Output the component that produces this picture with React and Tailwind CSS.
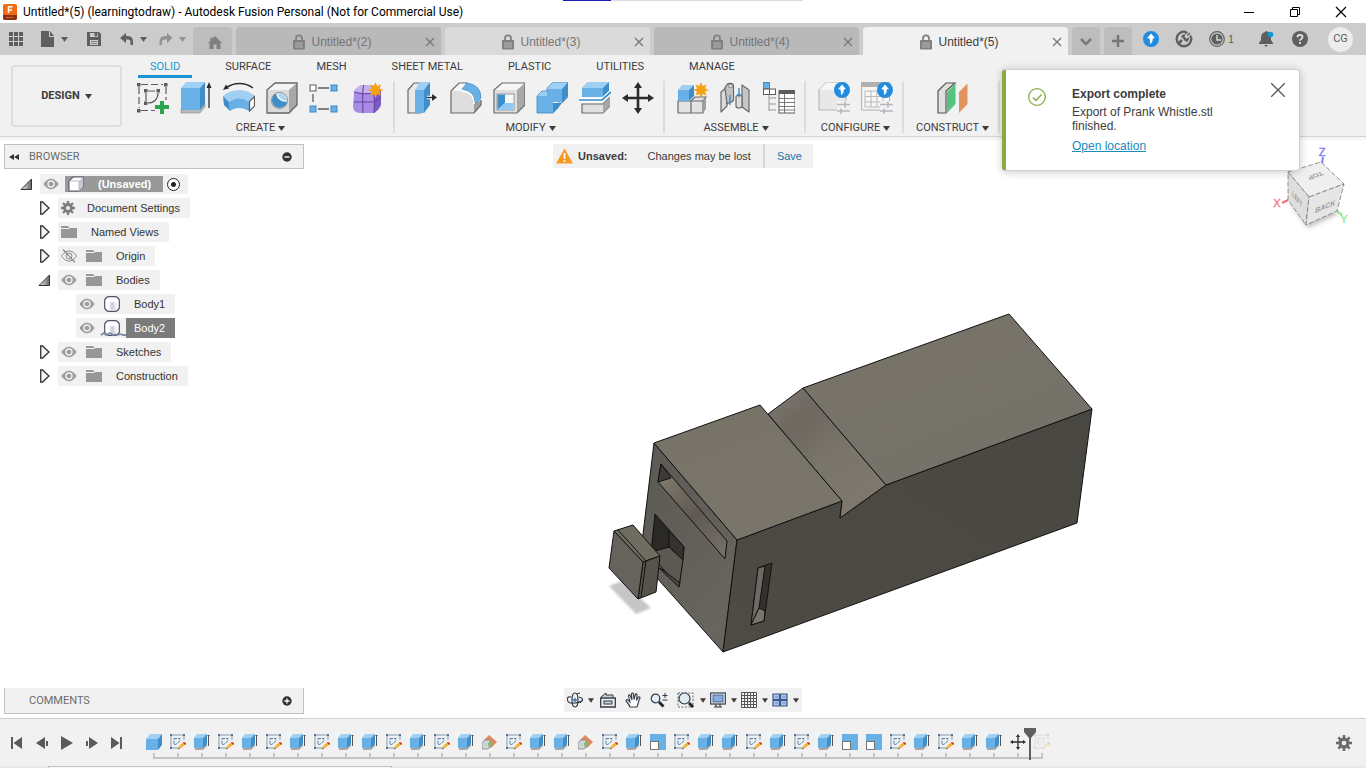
import React from "react";

const B1 = "#68b0e5";
const B2 = "#9fd0f4";
const B3 = "#3f8dc9";
const G = "#5c5c5c";

function Caret({ className = "" }) {
  return (
    <svg className={"shrink-0 " + className} width="7" height="5" viewBox="0 0 7 5" aria-hidden="true">
      <path d="M0 0H7L3.5 5Z" fill="currentColor" />
    </svg>
  );
}

function Svg({ s = 32, box, children, className = "" }) {
  return (
    <svg className={"block shrink-0 " + className} width={s} height={s} viewBox={box || `0 0 ${s} ${s}`} fill="none" aria-hidden="true">
      {children}
    </svg>
  );
}

/* ---------- shared glyph parts ---------- */

const STAR = "M0-8L1.6-3.9L5.6-5.6L3.9-1.6L8 0L3.9 1.6L5.6 5.6L1.6 3.9L0 8L-1.6 3.9L-5.6 5.6L-3.9 1.6L-8 0L-3.9-1.6L-5.6-5.6L-1.6-3.9Z";

function MovePath({ color = "#2b2b2b" }) {
  return <path d="M16 0L20 6H17.3V14.7H26V12L32 16L26 20V17.3H17.3V26H20L16 32L12 26H14.7V17.3H6V20L0 16L6 12V14.7H14.7V6H12Z" fill={color} />;
}

function UpBadge({ x, y, r = 8 }) {
  return (
    <g transform={`translate(${x} ${y})`}>
      <circle r={r} fill="#1f8ce0" />
      <path d="M0-5.5L4-.8H1.8C1.8 2 1.4 3.8-1 5C-.9 3-1.2 1-1.6-.8H-4Z" fill="#fff" />
    </g>
  );
}

function Sliders() {
  return (
    <g stroke="#b4b8bd" strokeWidth="1.6">
      <rect x="19" y="19" width="13" height="13" fill="#f1f1f1" stroke="none" />
      <path d="M19 22.5H32M27 19.5V25.5M19 29H32M23 26.5V32" />
    </g>
  );
}

/* ---------- ribbon icons ---------- */

const icons = {
  sketch: (
    <Svg>
      <path d="M4 2.5H26M2 5V26M29 5V18M4 28.5H18" stroke={G} strokeWidth="1.2" strokeDasharray="7 3" />
      <path d="M11 9H18M9 11V19M21 11C21 17 17 21 11 21" stroke={G} strokeWidth="1.2" />
      <g fill={G}>
        <rect x="0" y="1" width="3.5" height="3.5" /><rect x="27" y="1" width="3.5" height="3.5" /><rect x="0" y="27" width="3.5" height="3.5" />
        <rect x="7" y="7" width="3.5" height="3.5" /><rect x="19.500" y="7" width="3.500" height="3.500" /><rect x="7" y="19.500" width="3.500" height="3.500" />
      </g>
      <path d="M23 19H27V23H32V27H27V32H23V27H18V23H23Z" fill="#2da44e" />
    </Svg>
  ),
  extrude: (
    <Svg>
      <path d="M1 27V31H20L25 25V21Z" fill="#b8b8b8" stroke="#8c8c8c" strokeWidth=".6" />
      <path d="M1 6H20V28H1Z" fill={B1} /><path d="M1 6L6 0H25L20 6Z" fill={B2} /><path d="M20 6L25 0V22L20 28Z" fill={B3} />
      <path d="M29 3V26" stroke="#2b2b2b" strokeWidth="1.3" /><path d="M26.500 6L29 0L31.500 6Z" fill="#2b2b2b" />
    </Svg>
  ),
  revolve: (
    <Svg>
      <path d="M3 6C11 0 22 0 30 6" stroke="#2b2b2b" strokeWidth="1.3" /><path d="M0 8L3 2.500L6 6.500Z" fill="#2b2b2b" />
      <path d="M0 14C9 6 23 6 32 14L26 20C19 15 13 15 6 20Z" fill={B2} />
      <path d="M6 20C13 15 19 15 26 20V29C19 25 13 25 7 29Z" fill={B1} /><path d="M0 14L6 20L7 29L1 23Z" fill={B3} />
      <path d="M26.500 19.500L31.500 14.500V24L26.500 29Z" fill="#fff" stroke={G} strokeWidth="1.200" />
    </Svg>
  ),
  hole: (
    <Svg>
      <path d="M1 8L9 1H31V23L23 31H1Z" fill="#dadada" /><path d="M1 8L9 1H31L23 8Z" fill="#f4f4f4" /><path d="M23 8L31 1V23L23 31Z" fill="#a8a8a8" />
      <path d="M1 8L9 1H31V23L23 31H1Z" stroke="#666" strokeWidth="1.300" />
      <circle cx="13.500" cy="18.500" r="8" fill="#f3f3f3" stroke="#888" /><path d="M10 11.500C11 17 15 20 21 20A7.600 7.600 0 1 1 10 11.500Z" fill="#3f8dc9" />
      <path d="M12 12C13 16 17 19 21 19C19 12 15 11 12 12Z" fill="#a9d5f6" />
    </Svg>
  ),
  pattern: (
    <Svg>
      <path d="M9 6H20M4 12V20M9 27H20" stroke={G} strokeWidth="1.300" />
      <rect x="1" y="3" width="6" height="6" fill="#fff" stroke={G} /><rect x="22" y="3" width="6" height="6" fill={B1} stroke={B3} />
      <rect x="1" y="24" width="6" height="6" fill={B1} stroke={B3} /><rect x="22" y="24" width="6" height="6" fill={B1} stroke={B3} />
    </Svg>
  ),
  form: (
    <Svg>
      <path d="M2 11Q2 7 9 3H20Q29 3 29 10V22Q29 26 22 31H8Q1 31 1 24Z" fill="#a98be3" />
      <path d="M2 10Q4 5 10 3H20Q27 3 29 8Q27 10 22 11H8Q4 11 2 10Z" fill="#c6b2ef" /><path d="M22 11L29 8V22Q28 27 22 31Q23 20 22 11Z" fill="#7d5bc4" />
      <path d="M2 20H22L29 15M12 3Q10 7 11 31M2 10Q12 13 22 11Q23 20 22 31" stroke="#6545ab" strokeWidth="1.100" />
      <path d={STAR} transform="translate(23.500 8)" fill="#f5a114" />
    </Svg>
  ),
  pushpull: (
    <Svg>
      <path d="M1 8L7 1H13V31H1Z" fill="#e9e9e9" stroke="#6a6a6a" strokeWidth="1.200" />
      <path d="M8 8H17V31H8Z" fill={B1} /><path d="M8 8L13 0H23L17 8Z" fill={B2} /><path d="M17 8L23 0V23L17 31Z" fill={B3} />
      <path d="M20 15.500H27" stroke="#fff" strokeWidth="3.500" /><path d="M20 15.500H27" stroke="#2b2b2b" strokeWidth="1.400" /><path d="M25 12L30 15.500L25 19Z" fill="#2b2b2b" />
    </Svg>
  ),
  fillet: (
    <Svg>
      <path d="M1 9L9 1H18Q31 4 31 17V23L24 31H1Z" fill="#dedede" /><path d="M1 9L9 1H17L13 9Z" fill="#f6f6f6" /><path d="M24 31V22L31 18V23Z" fill="#9e9e9e" />
      <path d="M1 9L9 1H18M31 18V23L24 31H1V9" stroke="#6a6a6a" strokeWidth="1.200" />
      <path d="M12 7L17 1Q31 3 31 16L25 22Q25 9 12 7Z" fill={B1} stroke={B3} strokeWidth=".700" /><path d="M12 9Q24 10 24 22" stroke="#fff" strokeWidth="1.500" />
    </Svg>
  ),
  shell: (
    <Svg>
      <path d="M1 8L9 1H32V23L24 31H1Z" fill="#dedede" /><path d="M1 8L9 1H32L24 8Z" fill="#f6f6f6" /><path d="M24 8L32 1V23L24 31Z" fill="#a8a8a8" />
      <path d="M1 8L9 1H32V23L24 31H1Z" stroke="#6a6a6a" strokeWidth="1.200" />
      <rect x="4" y="12" width="17" height="16" fill="#f9f9f9" stroke="#999" /><path d="M4.500 12.500L12 12.500V21L4.500 28Z" fill={B3} /><path d="M4.500 28L12 21H20.500V28Z" fill="#8fcaf5" />
    </Svg>
  ),
  combine: (
    <Svg>
      <path d="M1 14H11V7H26V20H17V31H1Z" fill={B1} /><path d="M1 14L6 9H11V7L17 0H32L26 7H11V14Z" fill={B2} />
      <path d="M26 7L32 0V14L26 21ZM17 21H26L22 26V26L17 31Z" fill={B3} /><path d="M1 14L6 9H11V6L17 0H32V15L26 21H22V26L17 31H1Z" stroke={B3} strokeWidth=".800" />
    </Svg>
  ),
  split: (
    <Svg>
      <path d="M3 6L9 0H30L24 6V15H3Z" fill={B1} /><path d="M3 6L9 0H30L24 6Z" fill={B2} /><path d="M24 6L30 0V9L24 15Z" fill={B3} />
      <path d="M0 18H23L32 10" stroke="#fff" strokeWidth="4" /><path d="M0 18H23L32 10" stroke="#338cc8" strokeWidth="1.700" />
      <path d="M3 22H24L30 16V25L24 31H3Z" fill="#e0e0e0" stroke="#6a6a6a" strokeWidth="1.200" /><path d="M24 22L30 16V25L24 31Z" fill="#a8a8a8" />
    </Svg>
  ),
  move: <Svg><MovePath /></Svg>,
  component: (
    <Svg>
      <path d="M1 19H14V31H1ZM14 19L18 15H29L26 19V31H14Z" fill="#e3e3e3" stroke="#6a6a6a" strokeWidth="1.200" /><path d="M26 19L29 15V27L26 31Z" fill="#a0a0a0" /><path d="M14 19H26" stroke="#6a6a6a" />
      <path d="M1 8H12V19H1Z" fill={B1} /><path d="M1 8L5 3H17L12 8Z" fill={B2} /><path d="M12 8L17 3V14L12 19Z" fill={B3} />
      <path d={STAR} transform="translate(24 8)" fill="#f5a114" />
    </Svg>
  ),
  joint: (
    <Svg>
      <path d="M1 10L7 5V24L1 30Z" fill="#dadada" stroke="#6a6a6a" strokeWidth="1.200" strokeLinejoin="round" />
      <path d="M5 6Q7 1 10 1.500Q13.500 1 13.500 4V18Q13 20 10 20L7 22Z" fill="#c2c2c2" stroke="#6a6a6a" strokeWidth="1.200" />
      <ellipse cx="10.500" cy="4" rx="2.400" ry="1.500" fill="#eee" stroke="#6a6a6a" strokeWidth=".8" />
      <path d="M22 3L29 8V30L22 25Z" fill="#c6c6c6" stroke="#6a6a6a" strokeWidth="1.200" strokeLinejoin="round" />
      <path d="M16 15Q16 13 19 13T22 15V24Q22 26 19 26T16 24Z" fill="#dedede" stroke="#6a6a6a" strokeWidth="1.200" />
      <path d="M10 13V23M19 6V14M17.500 12L19 14.500L20.500 12" stroke={B3} strokeWidth="1.400" />
    </Svg>
  ),
  bom: (
    <Svg>
      <rect x=".500" y=".500" width="6" height="6" fill={B1} stroke={B3} /><rect x="0.500" y="7" width="6" height="5.500" fill="#fff" stroke={G} /><rect x="6.500" y="7" width="6" height="5.500" fill="#fff" stroke={G} />
      <path d="M6 13V29M6 16H13M6 22H13M6 28H13" stroke="#999" />
      <rect x="16" y="9" width="16" height="22" fill="#fff" stroke={G} /><rect x="16" y="8" width="16" height="4" fill={G} /><path d="M16 16.500H32M16 20.500H32M16 24.500H32M16 28H32M21.500 12V31" stroke={G} strokeWidth=".800" />
    </Svg>
  ),
  configure: (
    <Svg>
      <path d="M1 8L8 1H28V24L24 28H1Z" fill="#e8e8e8" stroke="#b8b8b8" strokeWidth="1.200" /><path d="M1 8L8 1H28L23 8Z" fill="#f6f6f6" /><Sliders /><UpBadge x={24} y={8} />
    </Svg>
  ),
  configTable: (
    <Svg>
      <rect x=".600" y="1" width="28" height="27" fill="#f6f6f6" stroke="#b0b0b0" /><rect x="0" y="0" width="29" height="5" fill="#b0b0b0" />
      <path d="M4 9H24M4 14.500H24M4 20H24M4 25H24M4 9V25M10 9V25M16 9V25M22 9V25" stroke="#b8b8b8" /><Sliders /><UpBadge x={24} y={8} />
    </Svg>
  ),
  plane: (
    <Svg>
      <path d="M1 9L9 1H18L9 9V31H1Z" fill="#e0e0e0" stroke="#555" strokeWidth="1.200" /><path d="M10 10L18.500 1.500V22L10 31Z" fill="#55c47e" /><path d="M22 10L30.500 1.500V22L22 31Z" fill="#e3935d" />
    </Svg>
  ),
};

const groups = [
  { label: "CREATE", items: ["sketch", "extrude", "revolve", "hole", "pattern", "form"] },
  { label: "MODIFY", items: ["pushpull", "fillet", "shell", "combine", "split", "move"] },
  { label: "ASSEMBLE", items: ["component", "joint", "bom"] },
  { label: "CONFIGURE", items: ["configure", "configTable"] },
  { label: "CONSTRUCT", items: ["plane"] },
];

/* ---------- title bar ---------- */

function TitleBar() {
  return (
    <header className="relative flex h-[23px] items-center bg-white pl-[3px] pr-[19px] text-black">
      <div className="absolute left-[563px] top-0 flex h-px w-60" aria-hidden="true">
        <span className="w-12 bg-[#1a1ab8]" />
        <span className="flex-1 bg-[#dcdcdc]" />
      </div>
      <Svg s={14} box="0 0 14 16" className="h-4">
        <rect width="14" height="16" rx="2" fill="#f26a16" />
        <path d="M0 11H14V14Q14 16 12 16H2Q0 16 0 14Z" fill="#8c2f0b" />
        <path d="M5.500 9V2.800H9.500M5.500 6H9" stroke="#fff" strokeWidth="1.500" />
        <path d="M3.500 13.500H10.500" stroke="#d98a5e" strokeWidth="1.200" strokeDasharray="2 .8" />
      </Svg>
      <h1 className="ml-[6px] flex-1 whitespace-nowrap font-['Roboto',sans-serif] text-[12px]">
        Untitled*(5) (learningtodraw) - Autodesk Fusion Personal (Not for Commercial Use)
      </h1>
      <div className="flex items-center gap-[34px]">
        <button aria-label="Minimize"><Svg s={12}><path d="M1 6.500H11" stroke="#000" /></Svg></button>
        <button aria-label="Restore"><Svg s={12}><path d="M1.500 3.500H8.500V10.500H1.500ZM3.500 3.500V1.500H10.500V8.500H8.500" stroke="#000" /></Svg></button>
        <button aria-label="Close window"><Svg s={12}><path d="M1 1L11 11M11 1L1 11" stroke="#000" strokeWidth="1.200" /></Svg></button>
      </div>
    </header>
  );
}

/* ---------- document tab bar ---------- */

function Lock() {
  return (
    <Svg s={14} box="0 0 14 16" className="h-4">
      <path d="M4 8V4.500A3 3.200 0 0 1 10 4.500V8" stroke="#808080" strokeWidth="1.800" />
      <rect x="1" y="6" width="12" height="9.500" rx="1" fill="#808080" />
      <path d="M3 9H11M3 11H11M3 13H11" stroke="#c4c4c4" strokeWidth=".800" />
    </Svg>
  );
}

const tabs = [
  { name: "Untitled*(2)", cls: "bg-[#b9b9b9] text-[#757575]" },
  { name: "Untitled*(3)", cls: "bg-[#dadada] text-[#757575]" },
  { name: "Untitled*(4)", cls: "bg-[#b9b9b9] text-[#757575]" },
  { name: "Untitled*(5)", cls: "bg-[#f1f1f1] text-[#3c3c3c]" },
];

function TabBar() {
  return (
    <div className="flex h-8 items-end bg-[#cccccc] text-[#5f5f5f]">
      <div className="flex h-8 w-[193px] shrink-0 items-center pl-[9px]">
        <button aria-label="Data panel">
          <Svg s={14}><path d="M0 0H4V4H0ZM5 0H9V4H5ZM10 0H14V4H10ZM0 5H4V9H0ZM5 5H9V9H5ZM10 5H14V9H10ZM0 10H4V14H0ZM5 10H9V14H5ZM10 10H14V14H10Z" fill="#5f5f5f" /></Svg>
        </button>
        <button aria-label="File" className="ml-[18px] flex items-center gap-[6px]">
          <Svg s={14} box="0 0 14 16" className="h-4"><path d="M0 0H8V6H13V16H0ZM9 0L13 5H9Z" fill="#5f5f5f" /></Svg>
          <Caret />
        </button>
        <button aria-label="Save file" className="ml-[19px]">
          <Svg s={14}><path d="M0 0H12L14 2V14H0ZM3 1V5H11V1ZM3 8V13H11V8Z" fill="#5f5f5f" fillRule="evenodd" /><path d="M8 1H10V4H8ZM4 9.500H10M4 11.500H10" fill="#5f5f5f" stroke="#5f5f5f" strokeWidth=".700" /></Svg>
        </button>
        <button aria-label="Undo" className="ml-[19px] flex items-center gap-[6px]">
          <Svg s={14}><path d="M0 6L6 1V4H8Q13 4 13 10V13H10.500V10Q10.500 7.500 8 7.500H6V11Z" fill="#5f5f5f" /></Svg>
          <Caret />
        </button>
        <button aria-label="Redo" className="ml-[12px] flex items-center gap-[6px] text-[#929292]">
          <Svg s={14}><path d="M13.500 6L8 1V4H6Q.500 4 .500 10V13H3V10Q3 7.500 6 7.500H8V11Z" fill="#929292" /></Svg>
          <Caret />
        </button>
      </div>
      <nav className="flex min-w-0 flex-1 gap-1" aria-label="Documents">
        <button aria-label="Home" className="flex h-7 w-[39px] shrink-0 items-center justify-center rounded-t bg-[#bdbdbd]">
          <Svg s={14} className="mt-1 ml-1"><path d="M7 0L14 7H12.500V13H8.500V8.500H5.500V13H1.500V7H0L2.500 4.500V1.500H4.500V2.500Z" fill="#808080" /></Svg>
        </button>
        {tabs.map((t) => (
          <div key={t.name} className={"flex h-7 w-[205px] min-w-0 items-center rounded-t pr-[3px] pt-[2px] " + t.cls}>
            <button className="ml-[6px] flex flex-1 items-center justify-center gap-[5px] font-['Liberation_Sans',sans-serif] text-[12px]">
              <Lock />{t.name}
            </button>
            <button aria-label={"Close " + t.name} className="flex w-4 justify-center">
              <Svg s={10}><path d="M1 1L9 9M9 1L1 9" stroke="#777" strokeWidth="1.300" /></Svg>
            </button>
          </div>
        ))}
        <button aria-label="All tabs" className="flex h-7 w-7 shrink-0 items-center justify-center rounded-t bg-[#bdbdbd]">
          <Svg s={14}><path d="M2 5L7 10L12 5" stroke="#7a7a7a" strokeWidth="2.500" /></Svg>
        </button>
        <button aria-label="New tab" className="flex h-7 w-7 shrink-0 items-center justify-center rounded-t bg-[#bdbdbd]">
          <Svg s={14}><path d="M7 1V13M1 7H13" stroke="#757575" strokeWidth="2.500" /></Svg>
        </button>
      </nav>
      <div className="flex h-8 shrink-0 items-center pr-[13px]">
        <button aria-label="Updates"><Svg s={16}><UpBadge x={8} y={8} /></Svg></button>
        <button aria-label="Extensions" className="ml-4">
          <Svg s={18}>
            <path d="M11.500 2.100A7.300 7.300 0 1 0 16 7" stroke="#5f5f5f" strokeWidth="2.300" />
            <path d="M3.500 13.500L7 10" stroke="#5f5f5f" strokeWidth="2.500" />
            <path d="M6 6.500Q8 3.500 10.500 4.500L9.500 7L11.500 8.500L14 7.500Q14.500 10.500 11.500 12L9.500 10.500L8 8.500Z" fill="#5f5f5f" />
            <path d="M12.500 5.500L15 3M10.500 4L12.500 2M14.500 7.500L16.500 5.500" stroke="#5f5f5f" strokeWidth="1.500" />
          </Svg>
        </button>
        <button aria-label="Job status" className="ml-4 flex w-[25px] items-center justify-between font-['Liberation_Sans',sans-serif] text-[11px]">
          <Svg s={16}><circle cx="8" cy="8" r="7.300" stroke="#5f5f5f" strokeWidth="1.200" /><circle cx="8" cy="8" r="5.600" fill="#5f5f5f" /><path d="M8 4V9H12" stroke="#ddd" strokeWidth="1.400" /></Svg>1
        </button>
        <button aria-label="Notifications" className="ml-[25px]">
          <Svg s={16}><path d="M7 0Q12 1 12 7V9L14 12V13H0V12L2 9V7Q2 2 6 1ZM5 14H9L7 16Z" fill="#5f5f5f" /><circle cx="11.500" cy="3.500" r="2.800" fill="#0f97d6" /></Svg>
        </button>
        <button aria-label="Help" className="ml-[17px]">
          <Svg s={16}><circle cx="8" cy="8" r="8" fill="#5f5f5f" /><path d="M5.500 6.200Q5.500 3.800 8 3.800T10.500 6Q10.500 7.300 9.200 8Q8 8.700 8 9.800M8 11V13" stroke="#e4e4e4" strokeWidth="1.800" /></Svg>
        </button>
        <button aria-label="Account" className="ml-5 flex size-[25px] items-center justify-center rounded-full bg-[#ececec] pt-px font-['Roboto',sans-serif] text-[11px]">CG</button>
      </div>
    </div>
  );
}

/* ---------- ribbon ---------- */

const ribbonTabs = ["SOLID", "SURFACE", "MESH", "SHEET METAL", "PLASTIC", "UTILITIES", "MANAGE"];

function Ribbon() {
  return (
    <section className="flex border-b-[3px] border-[#f6f6f6] bg-[#f1f1f1] font-['Roboto',sans-serif] text-[11px] text-[#3c3c3c]">
      <div className="flex h-[82px] w-full border-b border-[#d4d4d4]">
        <button className="ml-[11px] mt-[10px] flex h-[62px] w-[111px] shrink-0 items-center justify-center gap-[5px] rounded border-2 border-[#dedede] font-bold">
          DESIGN <Caret />
        </button>
        <div className="ml-[3px] min-w-0">
          <nav className="ml-[13px] flex gap-[21px]" aria-label="Ribbon">
            {ribbonTabs.map((t, i) => (
              <button key={t} className={"h-[23px] whitespace-nowrap border-b-[3px] px-3 pt-[2px] leading-5 " + (i === 0 ? "border-[#1b95d2] text-[#1b95d2]" : "border-transparent")}>
                {t}
              </button>
            ))}
          </nav>
          <div className="mt-[3px] flex">
            {groups.map((g) => (
              <div key={g.label} className="flex h-[52px] flex-col items-center border-r-2 border-[#dcdcdc] pl-[12px] pr-[9px] pt-px">
                <div className="flex gap-[11px]">
                  {g.items.map((n) => (
                    <button key={n} aria-label={n}>{icons[n]}</button>
                  ))}
                </div>
                <button className="mt-[7px] flex items-center gap-[3px] leading-[14px]">{g.label}<Caret /></button>
              </div>
            ))}
          </div>
        </div>
      </div>
    </section>
  );
}

/* ---------- notification ---------- */

function Toast() {
  return (
    <aside role="status" className="absolute right-[66px] top-[69px] z-10 flex w-[298px] rounded border border-l-4 border-[#d0d0d0] border-l-[#86ac43] bg-white pb-[17px] pt-[17px] font-['Liberation_Sans',sans-serif] text-[12px] leading-[14px] text-[#3c3c3c] shadow-[0_1px_8px_rgba(0,0,0,0.22)]">
      <Svg s={18} className="ml-[22px] mt-px"><circle cx="9" cy="9" r="8.300" stroke="#86ac43" strokeWidth="1.300" /><path d="M5 9.500L8 12.500L13.500 6.500" stroke="#86ac43" strokeWidth="1.400" /></Svg>
      <div className="ml-[26px] flex-1">
        <h2 className="font-bold">Export complete</h2>
        <p className="mt-1 w-[150px]">Export of Prank Whistle.stl finished.</p>
        <a href="#location" className="mt-[6px] inline-block font-['Liberation_Sans',sans-serif] text-[#1b8bc0] underline">Open location</a>
      </div>
      <button aria-label="Dismiss" className="mr-[14px] -mt-1 self-start"><Svg s={14}><path d="M0 0L14 14M14 0L0 14" stroke="#555" strokeWidth="1.300" /></Svg></button>
    </aside>
  );
}

/* ---------- browser tree ---------- */

function Eye({ off }) {
  return (
    <Svg s={16}>
      <path d="M.3 8Q8-2.500 15.700 8Q8 18.500.3 8Z" fill={off ? "none" : "#9c9c9c"} stroke={off ? "#8a8a8a" : "none"} />
      <circle cx="8" cy="8" r="3" stroke={off ? "#8a8a8a" : "#f1f1f1"} strokeWidth={off ? 1 : 1.4} />
      {off && <path d="M2 1.500L14 14.500" stroke="#8a8a8a" strokeWidth="1.200" />}
    </Svg>
  );
}

function Arrow({ open }) {
  return open ? (
    <Svg s={12}>
      <defs><linearGradient id="tri"><stop offset="0" stopColor="#eee" /><stop offset="1" stopColor="#666" /></linearGradient></defs>
      <path d="M11.500 1V11.500H1Z" fill="url(#tri)" stroke="#333" />
    </Svg>
  ) : (
    <Svg s={12} box="0 0 12 14" className="h-[14px]"><path d="M2.700 1H4.500L11 7L4.500 13H2.700Z" fill="#f4f4f4" stroke="#333" strokeWidth="1.300" /></Svg>
  );
}

const Folder = () => <Svg s={16}><path d="M0 2H7L8 3V4H0ZM0 5H8L9 4H16V14H0Z" fill="#979797" /></Svg>;

function Gear({ s = 14, c = "#7d7d7d" }) {
  return (
    <Svg s={s} box="0 0 16 16">
      <path d="M8 0V16M0 8H16M2.300 2.300L13.700 13.700M13.700 2.300L2.300 13.700" stroke={c} strokeWidth="2.600" />
      <circle cx="8" cy="8" r="5.600" fill={c} /><circle cx="8" cy="8" r="2.300" fill="#f1f1f1" />
    </Svg>
  );
}

function Cylinder({ sel }) {
  return (
    <Svg s={16} className="overflow-visible">
      <defs><linearGradient id="cyl"><stop offset=".2" stopColor="#fff" /><stop offset=".5" stopColor="#c9ccd8" /><stop offset=".9" stopColor="#f2f3f6" /></linearGradient></defs>
      <path d="M.7 4Q2 .7 5 .7H11Q14 .7 15.300 4V12Q14 15.300 11 15.300H5Q2 15.300.7 12Z" fill="#fff" stroke="#4c5468" strokeWidth="1.200" />
      <path d="M3 6H13V13Q8 15 3 13Z" fill="url(#cyl)" />
      {sel && <path d="M-3 15L0 13L2 15L6 13L9 15L12 14M14 15L16 14L19 15L22 15" stroke="#7c8ca8" strokeWidth="1.800" />}
    </Svg>
  );
}

const tree = [
  { name: "Document Settings", icon: "gear" },
  { name: "Named Views", icon: "folder" },
  { name: "Origin", eye: "off" },
  { name: "Bodies", eye: "on", open: true },
  { name: "Body1", body: true, eye: "on" },
  { name: "Body2", body: true, eye: "on", sel: true },
  { name: "Sketches", eye: "on" },
  { name: "Construction", eye: "on" },
];

function TreeRow({ n }) {
  return (
    <li className={"flex h-5 items-center " + (n.body ? "pl-[76px]" : "pl-[38px]")}>
      {!n.body && <button aria-label={"Toggle " + n.name} className="mr-2 w-3"><Arrow open={n.open} /></button>}
      <div className={"flex h-5 items-center whitespace-nowrap bg-[#f1f1f1] " + (n.sel ? "" : "pr-[10px]")}>
        {n.eye && <button aria-label={"Visibility of " + n.name} className="ml-[3px] mr-[6px]"><Eye off={n.eye === "off"} /></button>}
        <span className={n.icon === "gear" ? "ml-[3px] mr-3" : n.sel ? "ml-[3px] mr-[6px]" : "ml-[3px] mr-[14px]"}>
          {n.icon === "gear" ? <Gear /> : n.body ? <Cylinder sel={n.sel} /> : <Folder />}
        </span>
        <span className={n.sel ? "flex h-5 items-center bg-[#7b7b7b] pl-2 pr-[10px] text-white" : ""}>{n.name}</span>
      </div>
    </li>
  );
}

function SidePanel() {
  return (
    <div className="relative flex w-[304px] flex-col pb-1 pl-1 pt-1">
      <div className="flex h-[25px] items-center border border-[#c0c0c0] bg-[#f1f1f1] pl-1 pr-[11px] font-['Roboto',sans-serif] text-[11px] text-[#6b6b6b]">
        <button aria-label="Collapse browser"><Svg s={10}><path d="M5 2V8L0 5ZM10 2V8L5 5Z" fill="#333" /></Svg></button>
        <h2 className="ml-[10px] flex-1 pt-px">BROWSER</h2>
        <button aria-label="Minimize browser"><Svg s={10}><circle cx="5" cy="5" r="4.700" fill="#333" /><path d="M2.500 5H7.500" stroke="#fff" strokeWidth="1.400" /></Svg></button>
      </div>
      <ul className="-ml-1 mt-[5px] flex flex-col gap-1 font-['Liberation_Sans',sans-serif] text-[11px] text-[#333]">
        <li className="flex h-5 items-center pl-[20px]">
          <button aria-label="Toggle document" className="mr-2 w-3"><Arrow open /></button>
          <div className="flex h-5 items-center bg-[#f1f1f1] pl-[3px] pr-2">
            <button aria-label="Visibility of document"><Eye /></button>
            <span className="ml-[6px] flex h-4 items-center gap-[14px] bg-[#999] pl-[3px] pr-[12px] font-bold text-white">
              <Svg s={16}><path d="M1 5L5 1H15V11L11 15H1Z" fill="#fff" stroke="#5a6072" strokeWidth="1.100" /><path d="M11 5L15 1V11L11 15Z" fill="#c5c9d2" /><path d="M1.500 5H11V15" stroke="#b9bdc8" /></Svg>
              (Unsaved)
            </span>
            <label className="ml-1 flex">
              <input type="radio" defaultChecked aria-label="Activate document" className="size-[13px] appearance-none rounded-full border border-[#222] bg-[radial-gradient(circle,#222_2px,#fff_3px)]" />
            </label>
          </div>
        </li>
        {tree.map((n) => <TreeRow key={n.name} n={n} />)}
      </ul>
      <div className="mt-auto flex h-[26px] items-center border border-t-0 border-[#c0c0c0] bg-[#f1f1f1] pl-6 pr-[11px] pt-px font-['Roboto',sans-serif] text-[11px] text-[#6b6b6b]">
        <h2 className="flex-1 pt-px">COMMENTS</h2>
        <button aria-label="Expand comments"><Svg s={10}><circle cx="5" cy="5" r="4.700" fill="#333" /><path d="M2.500 5H7.500M5 2.500V7.500" stroke="#fff" strokeWidth="1.300" /></Svg></button>
      </div>
    </div>
  );
}

/* ---------- model ---------- */

function Model() {
  return (
    <svg className="absolute inset-0 size-full" viewBox="0 140 1366 578" role="img" aria-label="Whistle body">
      <defs>
        <linearGradient id="front" x1="0" y1="0" x2=".6" y2="1"><stop offset="0" stopColor="#5b5953" /><stop offset="1" stopColor="#67655e" /></linearGradient>
        <linearGradient id="side" x1="0" y1="1" x2="1" y2="0"><stop offset="0" stopColor="#4e4b45" /><stop offset="1" stopColor="#494741" /></linearGradient>
        <linearGradient id="topL" x1="0" y1="0" x2=".5" y2="1"><stop offset="0" stopColor="#787367" /><stop offset="1" stopColor="#79756b" /></linearGradient>
        <linearGradient id="topR" x1="0" y1="0" x2=".7" y2="1"><stop offset="0" stopColor="#797468" /><stop offset="1" stopColor="#74716a" /></linearGradient>
        <linearGradient id="notch" gradientUnits="userSpaceOnUse" x1="778" y1="405" x2="862" y2="505"><stop offset="0" stopColor="#78736a" /><stop offset=".2" stopColor="#6d675f" /><stop offset=".55" stopColor="#79756b" /><stop offset="1" stopColor="#7e776d" /></linearGradient>
        <linearGradient id="slot" gradientUnits="userSpaceOnUse" x1="664" y1="480" x2="726" y2="550"><stop offset="0" stopColor="#7c766b" /><stop offset=".5" stopColor="#5f5952" /><stop offset="1" stopColor="#746e65" /></linearGradient>
        <filter id="soft"><feGaussianBlur stdDeviation="1" /></filter>
      </defs>
      <path d="M609 586L622 581L651 608L636 614Z" fill="#c6c6c6" filter="url(#soft)" />
      <g stroke="#111" strokeWidth="1" strokeLinejoin="round">
        <path d="M654 443L737 540L723 652L640 559Z" fill="url(#front)" />
        <path d="M737 540L842 501L840 518L886 485L1092 409L1077 523L723 652Z" fill="url(#side)" />
        <path d="M768 414L803 388L886 485L840 518L842 501Z" fill="url(#notch)" />
        <path d="M654 443L760 405L842 501L737 540Z" fill="url(#topL)" />
        <path d="M803 388L1009 314L1092 409L886 485Z" fill="url(#topR)" />
        <path d="M661 464L727 541L725 559L658 482Z" fill="url(#slot)" />
        <path d="M661 464L671 478L658 482Z" fill="#3e3c37" />
        <path d="M655 514L684 547L679 587L651 553Z" fill="#2a2926" />
        <path d="M669 530L684 547L683 560L669 547Z" fill="#35332f" />
        <path d="M655 551L669 547L683 560L679 587L657 562Z" fill="#5d5952" />
        <path d="M659 568L663 570L680 583L679 587Z" fill="#4c4943" />
        <path d="M758 568L772 563L764 621L751 625Z" fill="#33312d" />
        <path d="M758 568L765 566L759 608L751 625Z" fill="#6d6a64" />
        <path d="M759 608L765 611L764 621L751 625Z" fill="#79756d" />
        <path d="M614 531L633 525L660 556L643 562Z" fill="#716c62" />
        <path d="M643 562L660 556L656 592L638 599Z" fill="#55534c" />
        <path d="M614 531L643 562L638 599L609 568Z" fill="#65635c" />
        <path d="M618 530L646 561L641 598" fill="none" />
      </g>
    </svg>
  );
}

function ViewCube() {
  return (
    <svg className="absolute right-4 top-1 h-[90px] w-[80px]" viewBox="1270 144 80 90" role="img" aria-label="View cube">
      <defs><filter id="cubeShadow"><feGaussianBlur stdDeviation="2" /></filter></defs>
      <path d="M1290 203L1308 228L1338 214L1330 205Z" fill="#999" opacity=".6" filter="url(#cubeShadow)" />
      <path d="M1322 163L1323 157" stroke="#8080f0" strokeWidth="2" /><path d="M1288 200L1282 203" stroke="#f07070" strokeWidth="2" /><path d="M1337 211L1342 215" stroke="#80e880" strokeWidth="2" />
      <g stroke="#777" strokeWidth=".8" strokeDasharray="5 2">
        <path d="M1288 172L1321 162L1344 184L1309 197Z" fill="#efefef" /><path d="M1288 172L1309 197L1306 225L1288 200Z" fill="#dedede" /><path d="M1309 197L1344 184L1337 211L1306 225Z" fill="#e6e6e6" />
      </g>
      <g fontFamily="Liberation Sans, sans-serif" fontSize="8" fontWeight="bold" fill="#9a9a9a" textAnchor="middle">
        <text transform="matrix(-.9 .33 -.55 -.6 1314 174)">TOP</text>
        <text transform="matrix(.88 -.36 -.15 .95 1325 209)">BACK</text>
        <text transform="matrix(.5 .62 -.05 1 1297 202)">LEFT</text>
      </g>
      <g fontFamily="Liberation Sans, sans-serif" fontSize="11" textAnchor="middle" strokeWidth=".4">
        <text x="1322" y="156" fill="#7c7cf2" stroke="#7c7cf2">Z</text><text x="1277" y="207" fill="#f28080" stroke="#f28080">X</text><text x="1344" y="223" fill="#8ceb95" stroke="#8ceb95">Y</text>
      </g>
    </svg>
  );
}

/* ---------- view navigation ---------- */

const N = "#333c4a";
const nav = [
  ["Orbit", true, <Svg s={16} key="o"><path d="M8 1Q11 1 11 8T8 15T5 8T8 1Z" stroke={N} strokeWidth="1.200" /><path d="M12 5Q16 6 15.500 8T8 11T.5 8T4 5" stroke={N} strokeWidth="1.200" /><path d="M8 6V10M6 8H10" stroke="#3a72b0" strokeWidth="1.300" /><path d="M10 2L13 1M13 11L15 9" stroke={N} /></Svg>],
  ["Look at", false, <Svg s={16} key="l"><path d="M.7 6H15.300V15H.7Z" fill="#eee" stroke={N} strokeWidth="1.300" /><rect x="4" y="9" width="8" height="3" fill="#ccd" stroke={N} /><path d="M1 5L6 1V3H13V5" fill="#ccc" stroke={N} /></Svg>],
  ["Pan", false, <Svg s={16} key="p"><path d="M5 15Q4 12 1 9Q1 7 3 8L5 10L3.500 3.500Q4.500 2 5.500 4L7 8L6.500 1.500Q8 .5 8.500 2L9 7.500L10.500 2Q12 1.500 12 3L11.500 8.500L13.500 5Q15 4.500 15 6Q13.500 9 13 12L12 15Z" fill="#fff" stroke={N} strokeWidth="1.100" /></Svg>],
  ["Zoom", false, <Svg s={18} key="z" box="0 0 18 16"><circle cx="5.500" cy="6.500" r="4.300" fill="#e3eef6" stroke={N} strokeWidth="1.200" /><path d="M9 10L13.500 14.500" stroke="#222" strokeWidth="2.800" /><path d="M15 1V6M12.500 3.500H17.500M12.500 8H17.500" stroke={N} /></Svg>],
  ["Fit", true, <Svg s={18} key="f" box="0 0 18 16"><path d="M1 1H16V15H1Z" stroke="#666" strokeDasharray="2 1.500" /><circle cx="7.500" cy="6.500" r="5.500" fill="#dfeaf0" stroke={N} strokeWidth="1.200" /><path d="M12 11L16 15" stroke="#222" strokeWidth="3" /></Svg>],
  ["Display settings", true, <Svg s={16} key="d"><rect x=".700" y="1" width="14.600" height="11" fill="#fff" stroke={N} strokeWidth="1.200" /><rect x="3" y="3" width="10" height="7" fill="#87aee0" stroke="#46628c" /><path d="M6 12V15H10V12M4 15H12" stroke={N} strokeWidth="1.200" /></Svg>],
  ["Grid settings", true, <Svg s={16} key="g"><rect x=".500" y=".500" width="15" height="15" fill="#f3f3f3" /><path d="M.5.5H15.500V15.500H.5ZM3.500 0V16M6.500 0V16M9.500 0V16M12.500 0V16M0 3.500H16M0 6.500H16M0 9.500H16M0 12.500H16" stroke="#555" /></Svg>],
  ["Viewports", true, <Svg s={16} key="v"><path d="M1 2H7.500V7.500H1ZM8.500 2H15V7.500H8.500ZM1 8.500H7.500V14H1ZM8.500 8.500H15V14H8.500Z" fill="#a9c4ea" stroke="#3c5a8c" strokeWidth="1.200" /><path d="M3 5H6M10.500 5H13.500M3 11H6M10.500 11H13.500" stroke="#6489c0" /></Svg>],
];

function Canvas() {
  return (
    <main className="relative flex min-h-[578px] flex-1 bg-white">
      <Model />
      <ViewCube />
      <SidePanel />
      <div className="relative flex flex-1 flex-col items-center justify-between pb-[6px] pr-[304px] pt-1 font-['Liberation_Sans',sans-serif] text-[11px] text-[#3c3c3c]">
        <div className="flex h-6 items-center whitespace-nowrap bg-[#f1f1f1] pl-[3px]">
          <Svg s={17} box="0 0 17 16" className="h-4"><path d="M8.500.5L17 15.500H0Z" fill="#f59b23" /><path d="M8.500 5V11M8.500 12.300V14" stroke="#fff" strokeWidth="1.700" /></Svg>
          <strong className="ml-[5px]">Unsaved:</strong>
          <span className="ml-5">Changes may be lost</span>
          <button className="ml-3 h-6 border-l-2 border-[#d8d8d8] pl-3 pr-[11px] text-[#1672b0]">Save</button>
        </div>
        <div className="flex h-6 items-center bg-[#f1f1f1] px-[3px]" role="toolbar" aria-label="Navigation">
          {nav.map(([name, menu, icon], i) => (
            <button key={name} aria-label={name} className={"flex items-center gap-[5px] " + (i === 0 ? "" : i === 1 ? "ml-[6px]" : menu && i > 4 ? "ml-1" : "ml-[9px]")}>
              {icon}{menu && <Caret className="w-[6px]" />}
            </button>
          ))}
        </div>
      </div>
    </main>
  );
}

/* ---------- timeline ---------- */

const tl = {
  b: <Svg s={16} key="b"><path d="M0 5H12V16H0Z" fill={B1} /><path d="M0 5L4 0H16L12 5Z" fill={B2} /><path d="M12 5L16 0V11L12 16Z" fill={B3} /></Svg>,
  e: <Svg s={16} key="e"><path d="M1 13V16H9L13 12V9Z" fill="#aaa" /><path d="M0 4H9V14H0Z" fill={B1} /><path d="M0 4L3 0H13L9 4Z" fill={B2} /><path d="M9 4L13 0V10L9 14Z" fill={B3} /><path d="M14.500 1V12M13.500 1.500H15.500" stroke="#444" strokeWidth=".9" /></Svg>,
  s: <Svg s={16} key="s"><path d="M1 1H14V6M1 1V14H8" stroke="#8298ad" /><path d="M4 4.500H10Q10 9 5 10.500H4Z" stroke="#4a7fb0" strokeDasharray="3 1" /><path d="M0 0H2V2H0ZM13 0H15V2H13ZM0 13H2V15H0Z" fill="#5b7590" /><path d="M8 15L9 12L13.500 8L16 10L11 14Z" fill="#f3b33f" /><path d="M13 8.500L14.500 8L16 9V10.500L15 11Z" fill="#dd3c2c" /><path d="M8 15.500L8.500 13.500L10 14.700Z" fill="#555" /></Svg>,
  p: <Svg s={16} key="p"><path d="M7 1L15 8L9 14L1 7Z" fill="#db8a62" /><path d="M0 9L3 6H8V13L6 15H0Z" fill="#d4d4d4" stroke="#888" strokeWidth=".8" /><path d="M6 9L10 6V11L7 15Z" fill="#6fbf73" /></Svg>,
  c: <Svg s={16} key="c"><path d="M0 0H16V16H9V7H0Z" fill={B1} /><rect x=".500" y="7.500" width="8" height="8" fill="#fff" stroke="#777" /></Svg>,
  m: <Svg s={16} box="0 0 32 32" key="m"><MovePath /></Svg>,
};
const sequence = "bseseseseesesepseepsecseeseseccseseem".split("");

const playback = [
  ["Go to start", "M0 0H2V12H0ZM11 0V12L2.500 6Z"],
  ["Step back", "M9 0V12L0 6ZM10 4H12V9H10Z"],
  ["Play", "M0-1L12 6L0 13Z"],
  ["Step forward", "M3 0V12L12 6ZM0 4H2V9H0Z"],
  ["Go to end", "M0 0V12L8.500 6ZM9 0H11V12H9Z"],
];

function Timeline() {
  return (
    <footer className="border-t border-[#cfcfcf] bg-[#f1f1f1]">
      <div className="flex h-[47px] pl-[11px] pr-[14px]">
        <div className="mt-[18px] flex w-[131px] shrink-0 gap-[13px]">
          {playback.map(([name, d]) => (
            <button key={name} aria-label={name} className="self-start"><Svg s={12} className="overflow-visible"><path d={d} fill="#5a5a5a" /></Svg></button>
          ))}
        </div>
        <div className="mt-[15px]">
          <ol className="flex">
            {sequence.map((k, i) => (
              <li key={i} className="flex w-6 flex-col items-center">
                <button aria-label={"Feature " + (i + 1)}>{tl[k]}</button>
                <span className="mt-[3px] h-[4px] w-[2px] bg-[#c4c4c4]" />
              </li>
            ))}
            <li className="relative flex w-6 flex-col items-center">
              <button aria-label="Rolled back sketch" className="opacity-20">{tl.s}</button>
              <span className="mt-[3px] h-[4px] w-[2px] bg-[#c4c4c4]" />
              <svg className="absolute -left-[6px] -top-[6px]" width="12" height="32" viewBox="0 0 12 32" aria-hidden="true"><path d="M0 0H12V4L7 10V32H5V10L0 4Z" fill="#5f5f5f" /></svg>
            </li>
          </ol>
          <div className="mx-[11px] h-[2px] bg-[#c4c4c4]" />
        </div>
        <button aria-label="Timeline settings" className="ml-auto self-center"><Gear s={16} c="#6b6b6b" /></button>
      </div>
      <div className="flex h-[2px] bg-[#e9e9e9]" aria-hidden="true">
        <span className="ml-12 w-[344px] border border-b-0 border-[#c4c4c4] bg-[#f6f6f6]" />
      </div>
    </footer>
  );
}

export default function App() {
  return (
    <div className="relative flex min-h-screen flex-col bg-white">
      <TitleBar />
      <TabBar />
      <Ribbon />
      <Toast />
      <Canvas />
      <Timeline />
    </div>
  );
}
